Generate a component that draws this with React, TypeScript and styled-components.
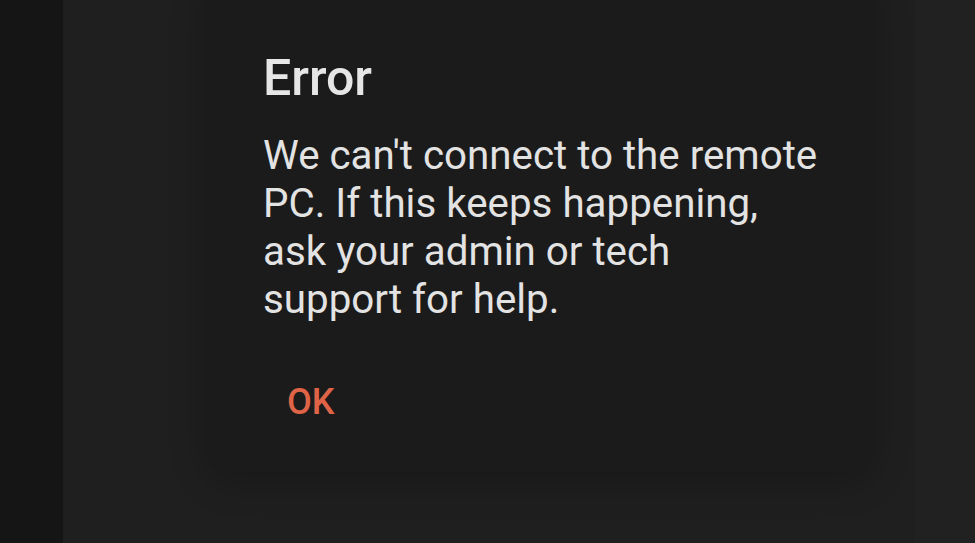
import React from "react";
import styled, { createGlobalStyle } from "styled-components";

const Global = createGlobalStyle`
  html, body { margin: 0; padding: 0; background: #1f1f1f; }
  body { font-family: Roboto, "Noto Sans", "Liberation Sans", sans-serif; }
`;

const Page = styled.div`
  display: flex;
  width: 975px;
  height: 543px;
  overflow: hidden;
`;

const LeftStrip = styled.div`
  width: 63px;
  flex: none;
  background: #151515;
`;

const Backdrop = styled.div`
  flex: 1;
  display: flex;
  align-items: flex-start;
  padding-left: 142px;
  background: #1f1f1f;
`;

const RightStrip = styled.div`
  width: 60px;
  flex: none;
  background: #212121;
`;

const Dialog = styled.div`
  width: 670px;
  margin-top: -30px;
  padding: 80px 58px 0 58px;
  height: 502px;
  box-sizing: border-box;
  background: #1b1b1b;
  border-radius: 28px;
  box-shadow: 0 10px 36px rgba(0, 0, 0, 0.22);
  display: flex;
  flex-direction: column;
  align-items: flex-start;
`;

const Title = styled.h1`
  margin: 0;
  font-size: 50px;
  line-height: 56px;
  font-weight: 500;
  color: #e6e6e6;
`;

const Message = styled.p`
  margin: 26px 0 0 0;
  font-size: 40.3px;
  line-height: 48px;
  font-weight: 400;
  white-space: nowrap;
  color: #e3e3e3;
`;

const Actions = styled.div`
  display: flex;
  margin-top: 54px;
`;

const TextButton = styled.button`
  border: none;
  background: transparent;
  padding: 0 24px;
  font-family: inherit;
  font-size: 36px;
  line-height: 48px;
  font-weight: 500;
  color: #df6447;
  cursor: pointer;
`;

export default function App() {
  return (
    <>
      <Global />
      <Page>
        <LeftStrip />
        <Backdrop>
          <Dialog>
            <Title>Error</Title>
            <Message>
              We can't connect to the remote
              <br />
              PC. If this keeps happening,
              <br />
              ask your admin or tech
              <br />
              support for help.
            </Message>
            <Actions>
              <TextButton>OK</TextButton>
            </Actions>
          </Dialog>
        </Backdrop>
        <RightStrip />
      </Page>
    </>
  );
}
